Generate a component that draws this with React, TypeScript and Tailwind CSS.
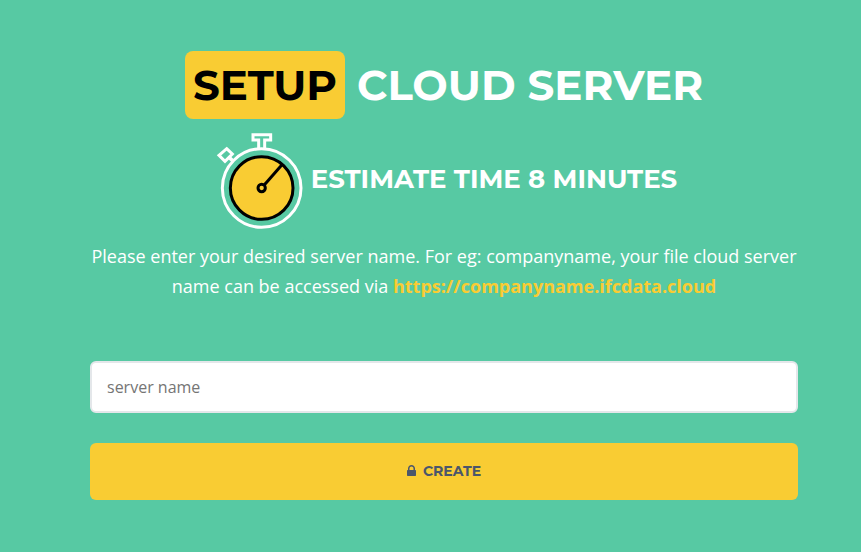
function StopwatchIcon() {
	return (
		<svg
			className="size-[100px] shrink-0"
			viewBox="18 18 300 300"
			fill="none"
			strokeWidth="9"
			aria-hidden="true"
		>
			<g stroke="#fff">
				<circle cx="170" cy="189" r="118" />
				<path d="M161 70V45H144V29H197V45H179V70" />
				<path d="M65 71L82 87L60 109L42 91Z" />
				<path d="M70 95L84 108" strokeWidth="11" />
			</g>
			<circle cx="170" cy="189" r="94" fill="#f9cc33" stroke="#000" />
			<circle cx="170" cy="189" r="11" stroke="#000" />
			<path d="M177 181L231 119" stroke="#000" />
		</svg>
	);
}

function LockIcon() {
	return (
		<svg
			className="h-[11px] w-[9px]"
			viewBox="0 128 1152 1408"
			fill="currentColor"
			aria-hidden="true"
		>
			<path d="M320 768h512v-192q0-106-75-181t-181-75-181 75-75 181v192zm832 96v576q0 40-28 68t-68 28h-960q-40 0-68-28t-28-68v-576q0-40 28-68t68-28h32v-192q0-184 132-316t316-132 316 132 132 316v192h32q40 0 68 28t28 68z" />
		</svg>
	);
}

export default function App() {
	return (
		<main className="min-h-screen bg-[#57c9a3] pt-[51px] pr-[63px] pb-[52px] pl-[90px] font-['Open_Sans',sans-serif] text-white">
			<header className="flex flex-col items-center text-center font-['Montserrat',sans-serif] font-bold uppercase">
				<h1 className="flex items-center gap-3 text-[42px] leading-[68px]">
					<span className="rounded-lg bg-[#f9cc33] px-2 text-black">Setup</span>
					<span>Cloud Server</span>
				</h1>
				<div className="mt-3 flex items-center">
					<StopwatchIcon />
					<h2 className="pb-1 text-[26px] leading-8">
						Estimate time 8 minutes
					</h2>
				</div>
			</header>

			<p className="mt-2.5 text-center text-lg leading-[30px]">
				Please enter your desired server name. For eg: companyname, your file
				cloud server name can be accessed via{" "}
				<a
					href="https://companyname.ifcdata.cloud"
					className="inline-block font-bold text-[#f9cc33]"
				>
					https://companyname.ifcdata.cloud
				</a>
			</p>

			<form className="mt-[60px] flex flex-col gap-[30px]">
				<input
					type="text"
					name="server"
					aria-label="server name"
					placeholder="server name"
					className="h-[52px] w-full rounded-md border-2 border-[#e4e7ea] bg-white px-[15px] text-base text-gray-700 placeholder:text-[#757575]"
				/>
				<button
					type="button"
					className="flex h-[57px] w-full items-center justify-center gap-[7px] rounded-md bg-[#f9cc33] pb-0.5 font-['Montserrat',sans-serif] text-sm font-bold text-[#4b566b] uppercase"
				>
					<LockIcon />
					Create
				</button>
			</form>
		</main>
	);
}
